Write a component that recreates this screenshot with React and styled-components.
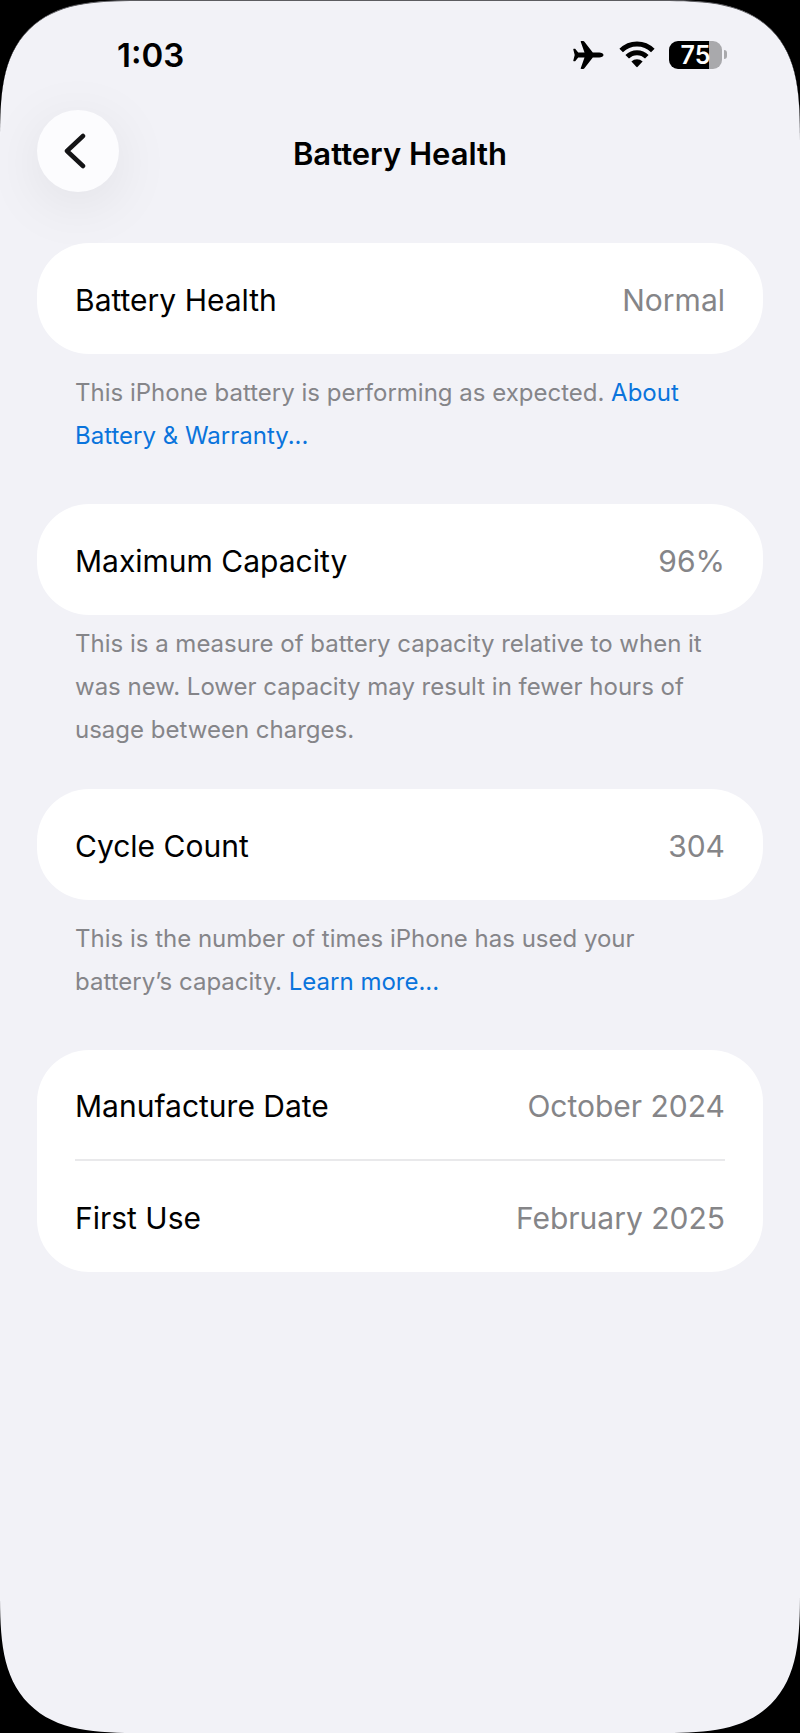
import React from "react";
import styled, { createGlobalStyle } from "styled-components";

const sections = [
  {
    rows: [{ label: "Battery Health", value: "Normal" }],
    note: "This iPhone battery is performing as expected.",
    link: { text: "About Battery & Warranty...", href: "#warranty" },
  },
  {
    rows: [{ label: "Maximum Capacity", value: "96%" }],
    note:
      "This is a measure of battery capacity relative to when it was new. Lower capacity may result in fewer hours of usage between charges.",
    compact: true,
  },
  {
    rows: [{ label: "Cycle Count", value: "304" }],
    note: "This is the number of times iPhone has used your battery’s capacity.",
    link: { text: "Learn more...", href: "#cycles" },
  },
  {
    rows: [
      { label: "Manufacture Date", value: "October 2024" },
      { label: "First Use", value: "February 2025" },
    ],
  },
];

const App = () => {
  return (
    <>
      <GlobalStyle />
      <Screen>
        <StatusBar>
          <Time>1:03</Time>
          <StatusIcons>
            <PlaneIcon />
            <WifiIcon />
            <Battery>
              <BatteryBody $level={75}>75</BatteryBody>
              <BatteryTip />
            </Battery>
          </StatusIcons>
        </StatusBar>
        <NavBar>
          <BackButton type="button" aria-label="Back">
            <svg width="22" height="36" viewBox="0 0 22 36" fill="none">
              <path
                d="M19 3 L3 18 L19 33"
                stroke="#141416"
                strokeWidth="4.500"
                strokeLinecap="round"
                strokeLinejoin="round"
              />
            </svg>
          </BackButton>
          <Title>Battery Health</Title>
        </NavBar>
        <Content>
          {sections.map((section) => (
            <section key={section.rows[0].label}>
              <Card>
                {section.rows.map((row) => (
                  <Row key={row.label}>
                    <Label>{row.label}</Label>
                    <Value>{row.value}</Value>
                  </Row>
                ))}
              </Card>
              {section.note && (
                <Note $compact={section.compact}>
                  {section.note}{" "}
                  {section.link && (
                    <NoteLink href={section.link.href}>
                      {section.link.text}
                    </NoteLink>
                  )}
                </Note>
              )}
            </section>
          ))}
        </Content>
      </Screen>
    </>
  );
};

export default App;

const PlaneIcon = () => (
  <svg width="32" height="28" viewBox="0 0 32 28" fill="#000">
    <path d="M30.500 14c0-1.500-2-2.400-4.300-2.400h-6.400L11.600.9C11.200.3 10.800.1 10.100.1H8.400c-.5 0-.8.4-.6.9l3.700 10.600H5.200L2.600 8.300C2.300 7.900 2 7.800 1.500 7.800H.8c-.4 0-.6.3-.5.7L1.700 14 .3 19.500c-.1.400.1.700.5.700h.7c.5 0 .8-.1 1.100-.5l2.600-3.300h6.300L7.800 27c-.2.500.1.900.6.900h1.700c.7 0 1.100-.2 1.500-.8l8.200-10.700h6.400c2.300 0 4.300-.9 4.300-2.400z" />
  </svg>
);

const WifiIcon = () => (
  <svg width="36" height="27" viewBox="0 0 36 27" fill="none">
    <path d="M2.200 9.500a22.200 22.200 0 0 1 31.600 0" stroke="#000" strokeWidth="5" />
    <path d="M8.200 15.800a13.800 13.800 0 0 1 19.600 0" stroke="#000" strokeWidth="5" />
    <path d="M12.400 20.600a8 8 0 0 1 11.200 0L18.700 25.800a1 1 0 0 1-1.400 0z" fill="#000" />
  </svg>
);

const GlobalStyle = createGlobalStyle`
  * {
    box-sizing: border-box;
    margin: 0;
  }
  body {
    background: #000;
    font-family: Inter, "Liberation Sans", sans-serif;
    color: #000;
  }
`;

const Screen = styled.main`
  min-height: 100vh;
  background: #f2f2f7;
  border-top: 1px solid #5c5c60;
  border-radius: 100px;
  overflow: hidden;
  @supports (corner-shape: superellipse(1.6)) {
    border-radius: 142px;
    corner-shape: superellipse(1.6);
  }
`;

const StatusBar = styled.div`
  height: 109px;
  padding: 0 73px 2px 117px;
  display: flex;
  justify-content: space-between;
  align-items: center;
`;

const Time = styled.time`
  font-size: 33px;
  font-weight: 600;
`;

const StatusIcons = styled.div`
  display: flex;
  align-items: center;
  gap: 14px;
`;

const Battery = styled.div`
  display: flex;
  align-items: center;
  gap: 2px;
`;

const BatteryBody = styled.div`
  width: 53px;
  height: 28px;
  border-radius: 9px;
  background: linear-gradient(
    to right,
    #000 ${({ $level }) => $level}%,
    #a9a9ac ${({ $level }) => $level}%
  );
  color: #fff;
  font-size: 25px;
  font-weight: 600;
  line-height: 28px;
  text-align: center;
`;

const BatteryTip = styled.div`
  width: 3px;
  height: 9px;
  border-radius: 0 4px 4px 0;
  background: #a9a9ac;
`;

const NavBar = styled.header`
  padding: 0 37px;
  display: grid;
  grid-template-columns: 82px 1fr 82px;
  align-items: center;
`;

const BackButton = styled.button`
  width: 82px;
  height: 82px;
  padding: 0 6px 0 0;
  border: none;
  border-radius: 50%;
  background: #fcfcfe;
  box-shadow: 0 12px 60px rgba(0, 0, 0, 0.08);
  display: flex;
  align-items: center;
  justify-content: center;
  cursor: pointer;
`;

const Title = styled.h1`
  padding-top: 4px;
  font-size: 31px;
  font-weight: 600;
  text-align: center;
`;

const Content = styled.div`
  padding: 51px 37px;
`;

const Card = styled.div`
  padding: 0 38px;
  border-radius: 52px;
  background: #fff;
  position: relative;
`;

const Row = styled.div`
  height: 111px;
  padding-top: 2px;
  display: flex;
  justify-content: space-between;
  align-items: center;
  font-size: 30px;
  &:not(:last-child) {
    border-bottom: 2px solid #e9e9eb;
  }
`;

const Label = styled.span`
  color: #000;
`;

const Value = styled.span`
  color: #858588;
`;

const Note = styled.p`
  padding: ${({ $compact }) => ($compact ? "7px 38px 38px" : "17px 38px 47px")};
  font-size: 24px;
  line-height: 43px;
  color: #858589;
`;

const NoteLink = styled.a`
  color: #0a74dc;
  text-decoration: none;
`;
